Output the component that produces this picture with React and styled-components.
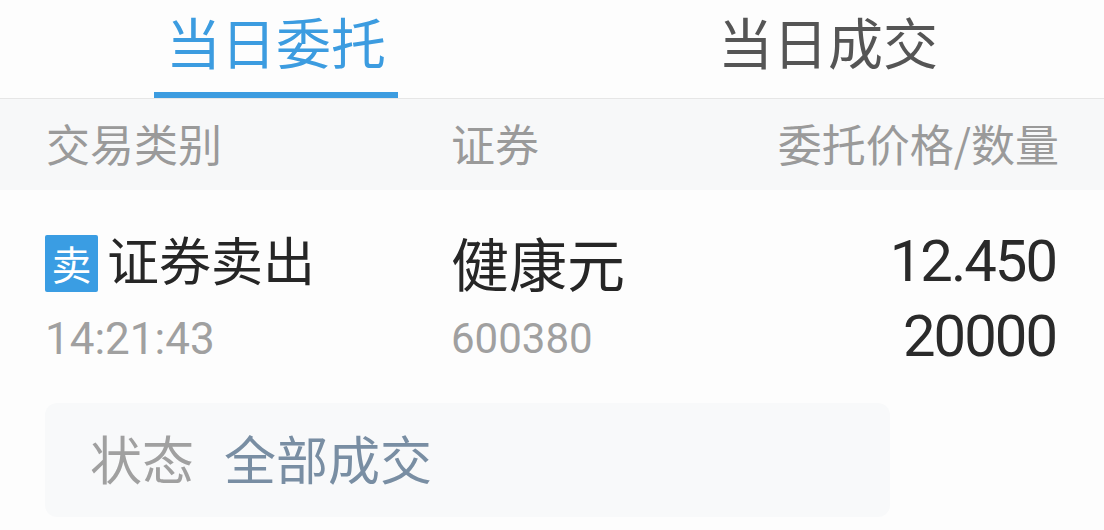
import React from "react";
import styled, { createGlobalStyle } from "styled-components";

const GlobalStyle = createGlobalStyle`
  html, body {
    margin: 0;
    padding: 0;
    background: #fdfdfd;
  }
  body {
    font-family: "Noto Sans CJK SC", "Noto Sans", sans-serif;
  }
`;

const Page = styled.div`
  width: 1104px;
  height: 530px;
  overflow: hidden;
  background: #fdfdfd;
`;

const TabBar = styled.div`
  display: grid;
  grid-template-columns: 1fr 1fr;
  border-bottom: 1px solid #e6e6e6;
`;

const Tab = styled.div`
  display: flex;
  justify-content: center;
`;

const TabLabel = styled.div`
  box-sizing: border-box;
  height: 98px;
  padding: 0 12px;
  font-size: 55px;
  line-height: 80px;
  color: ${(p) => (p.$active ? "#3c9ce0" : "#555555")};
  border-bottom: 6px solid ${(p) => (p.$active ? "#3c9ce0" : "transparent")};
`;

const HeaderRow = styled.div`
  box-sizing: border-box;
  height: 91px;
  padding: 22px 45px 0 46px;
  display: grid;
  grid-template-columns: 405px 1fr auto;
  background: #f7f8f9;
  font-size: 44px;
  line-height: 44px;
  color: #9a9a9a;
`;

const OrderRow = styled.div`
  padding: 39px 48px 0 45px;
  display: grid;
  grid-template-columns: 406px 1fr auto;
`;

const Col = styled.div`
  display: flex;
  flex-direction: column;
  align-items: ${(p) => (p.$right ? "flex-end" : "flex-start")};
`;

const TypeLine = styled.div`
  display: flex;
  align-items: flex-start;
  height: 60px;
`;

const Badge = styled.div`
  width: 53px;
  height: 57px;
  margin-top: 6px;
  border-radius: 2px;
  background: #3a9de3;
  color: #ffffff;
  font-size: 40px;
  line-height: 57px;
  text-align: center;
`;

const TypeName = styled.div`
  margin-left: 9px;
  font-size: 52px;
  line-height: 60px;
  color: #262626;
`;

const StockName = styled.div`
  margin-top: 3px;
  font-size: 58px;
  line-height: 60px;
  color: #262626;
`;

const SubText = styled.div`
  margin-top: ${(p) => p.$mt}px;
  font-family: Roboto, "Noto Sans", sans-serif;
  font-size: ${(p) => p.$size}px;
  line-height: 50px;
  color: #a0a0a0;
`;

const Figure = styled.div`
  margin-top: ${(p) => p.$mt}px;
  font-family: Roboto, "Noto Sans", sans-serif;
  font-size: 58px;
  line-height: 60px;
  letter-spacing: -2px;
  color: #2a2a2a;
`;

const StatusBox = styled.div`
  box-sizing: border-box;
  width: 845px;
  height: 114px;
  margin: 37px 0 0 45px;
  padding: 0 0 4px 45px;
  display: flex;
  align-items: center;
  gap: 30px;
  border-radius: 12px;
  background: #f8f9fa;
  font-size: 52px;
  line-height: 60px;
`;

const StatusLabel = styled.span`
  color: #a0a0a0;
`;

const StatusValue = styled.span`
  color: #798ea3;
`;

export default function App() {
  return (
    <Page>
      <GlobalStyle />
      <TabBar>
        <Tab>
          <TabLabel $active>当日委托</TabLabel>
        </Tab>
        <Tab>
          <TabLabel>当日成交</TabLabel>
        </Tab>
      </TabBar>
      <HeaderRow>
        <span>交易类别</span>
        <span>证券</span>
        <span>委托价格/数量</span>
      </HeaderRow>
      <OrderRow>
        <Col>
          <TypeLine>
            <Badge>卖</Badge>
            <TypeName>证券卖出</TypeName>
          </TypeLine>
          <SubText $mt={25} $size={44}>14:21:43</SubText>
        </Col>
        <Col>
          <StockName>健康元</StockName>
          <SubText $mt={22} $size={42}>600380</SubText>
        </Col>
        <Col $right>
          <Figure $mt={2}>12.450</Figure>
          <Figure $mt={15}>20000</Figure>
        </Col>
      </OrderRow>
      <StatusBox>
        <StatusLabel>状态</StatusLabel>
        <StatusValue>全部成交</StatusValue>
      </StatusBox>
    </Page>
  );
}
